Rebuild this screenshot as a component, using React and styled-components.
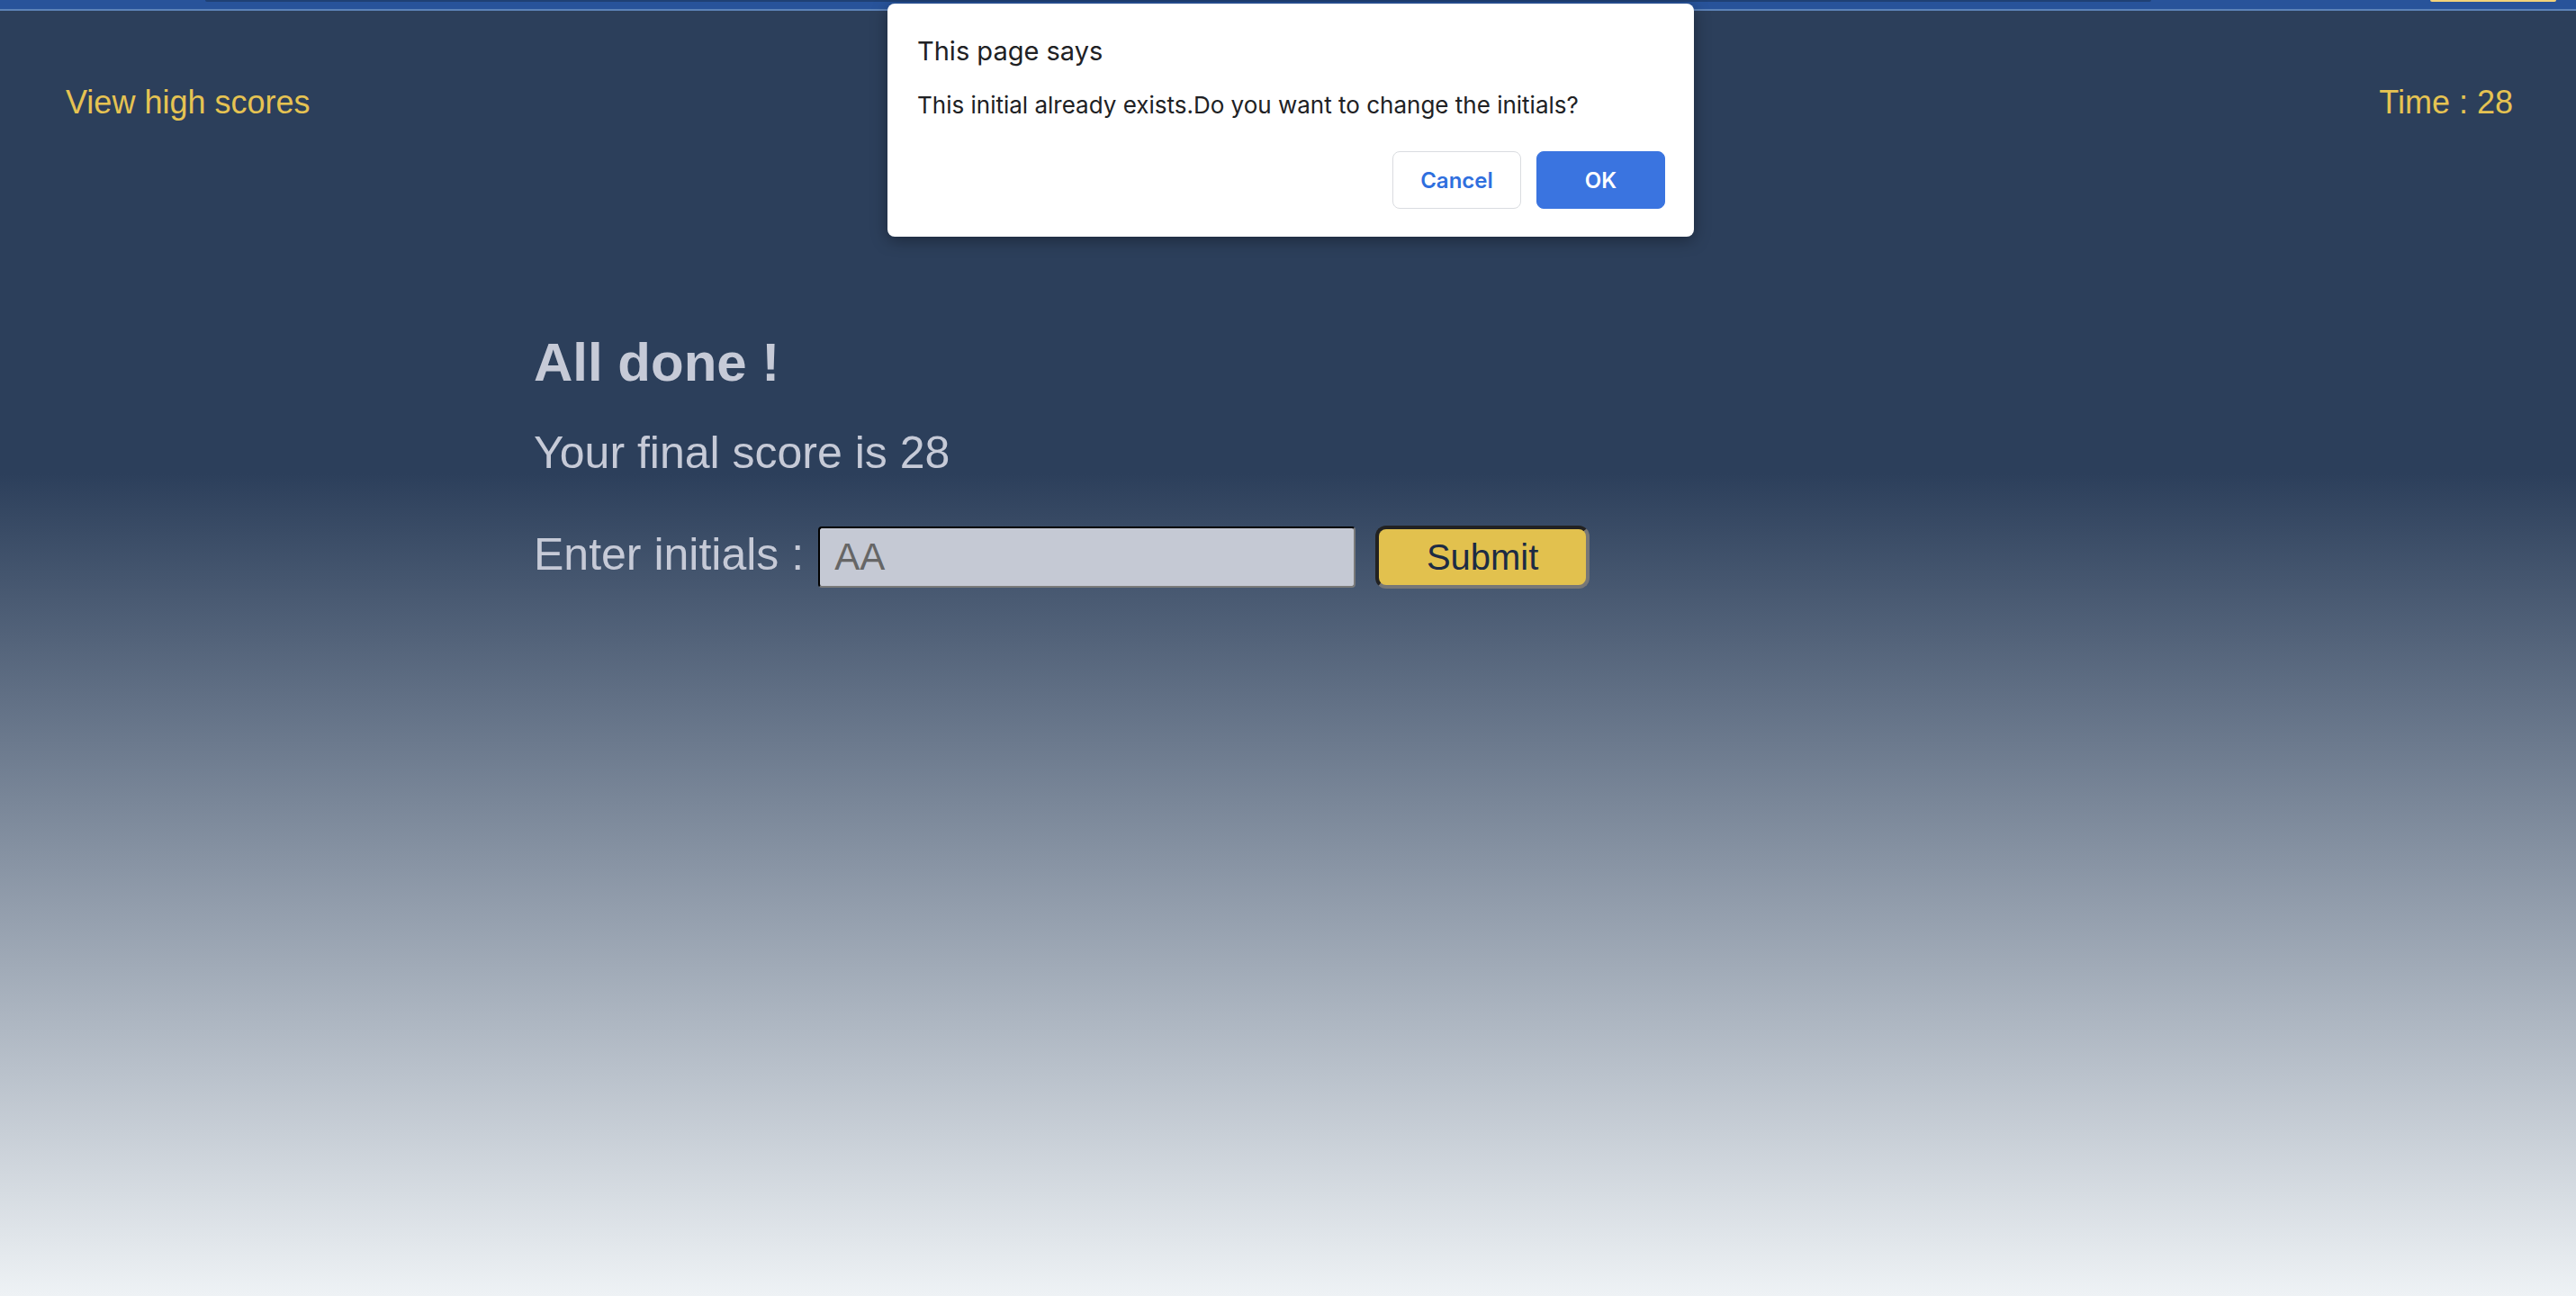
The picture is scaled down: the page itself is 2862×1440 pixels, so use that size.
import React from "react";
import styled, { createGlobalStyle } from "styled-components";

const GlobalStyle = createGlobalStyle`
  html, body {
    margin: 0;
    padding: 0;
    height: 100%;
  }
  body {
    font-family: "Liberation Sans", Arial, Helvetica, sans-serif;
  }
  #root {
    min-height: 100vh;
  }
`;

const Page = styled.div`
  position: relative;
  display: flex;
  flex-direction: column;
  min-height: 100vh;
  overflow: hidden;
`;

const BrowserBar = styled.div`
  display: flex;
  align-items: flex-start;
  height: 10px;
  background: #28539a;
  border-bottom: 2px solid #5c82b8;
  padding-left: 228px;
`;

const TabEdge = styled.div`
  width: 2162px;
  height: 2px;
  background: #1f4074;
  border-radius: 0 0 4px 4px;
`;

const Pill = styled.div`
  margin-left: 310px;
  width: 140px;
  height: 2px;
  background: #f3d27a;
  border-radius: 0 0 6px 6px;
`;

const Main = styled.main`
  flex: 1;
  display: flex;
  flex-direction: column;
  background: linear-gradient(
    to bottom,
    #2c3f5b 0%,
    #2c3f5b 36%,
    #eef2f5 100%
  );
`;

const Header = styled.header`
  display: flex;
  justify-content: space-between;
  align-items: baseline;
  padding: 81px 70px 0 73px;
`;

const HeaderText = styled.div`
  font-size: 36px;
  color: #e6c352;
`;

const Content = styled.section`
  display: flex;
  flex-direction: column;
  margin-left: 593px;
  margin-top: 233px;
  color: #c6cad7;
`;

const Title = styled.h1`
  margin: 0;
  font-size: 60px;
  font-weight: 700;
`;

const Score = styled.p`
  margin: 37px 0 0;
  font-size: 50px;
`;

const Row = styled.form`
  display: flex;
  align-items: baseline;
  margin-top: 52px;
`;

const Label = styled.label`
  font-size: 50px;
  margin-right: 16px;
`;

const Input = styled.input`
  box-sizing: border-box;
  width: 597px;
  height: 68px;
  padding: 0 16px;
  font-family: "Liberation Sans", Arial, sans-serif;
  font-size: 42px;
  color: #666;
  background: #c5c9d4;
  border: 2px inset #777;
  border-top-color: #222;
  border-left-color: #222;
  border-bottom-color: #7a7a7a;
  border-right-color: #7a7a7a;
  border-radius: 4px;
  outline: none;
`;

const SubmitButton = styled.button`
  box-sizing: border-box;
  margin-left: 22px;
  width: 238px;
  height: 70px;
  font-family: "Liberation Sans", Arial, sans-serif;
  font-size: 40px;
  color: #1c2b44;
  background: #e2c14e;
  border: 4px solid #222;
  border-bottom-color: #777;
  border-right-color: #777;
  border-radius: 12px;
  padding: 0;
`;

const Dialog = styled.div`
  position: absolute;
  top: 4px;
  left: 986px;
  box-sizing: border-box;
  width: 896px;
  height: 259px;
  padding: 35px 32px 31px 33px;
  background: #ffffff;
  border-radius: 8px;
  box-shadow: 0 4px 18px rgba(0, 0, 0, 0.35);
  font-family: Inter, "Noto Sans", sans-serif;
  display: flex;
  flex-direction: column;
`;

const DialogTitle = styled.div`
  font-size: 29px;
  line-height: 36px;
  color: #202124;
`;

const DialogMessage = styled.div`
  margin-top: 26px;
  font-size: 26px;
  line-height: 32px;
  color: #202124;
`;

const DialogActions = styled.div`
  margin-top: auto;
  display: flex;
  justify-content: flex-end;
  gap: 17px;
`;

const DialogButton = styled.button`
  box-sizing: border-box;
  width: 143px;
  height: 64px;
  border-radius: 8px;
  font-family: Inter, "Noto Sans", sans-serif;
  font-size: 24px;
  font-weight: 600;
  border: 1px solid ${(p) => (p.$primary ? "#3a74e0" : "#dadce0")};
  background: ${(p) => (p.$primary ? "#3a74e0" : "#ffffff")};
  color: ${(p) => (p.$primary ? "#ffffff" : "#2f6fde")};
`;

export default function App() {
  return (
    <>
      <GlobalStyle />
      <Page>
        <BrowserBar>
          <TabEdge />
          <Pill />
        </BrowserBar>
        <Main>
          <Header>
            <HeaderText>View high scores</HeaderText>
            <HeaderText>Time : 28</HeaderText>
          </Header>
          <Content>
            <Title>All done !</Title>
            <Score>Your final score is 28</Score>
            <Row onSubmit={(e) => e.preventDefault()}>
              <Label htmlFor="initials">Enter initials :</Label>
              <Input id="initials" defaultValue="AA" />
              <SubmitButton type="submit">Submit</SubmitButton>
            </Row>
          </Content>
        </Main>
        <Dialog role="alertdialog">
          <DialogTitle>This page says</DialogTitle>
          <DialogMessage>
            This initial already exists.Do you want to change the initials?
          </DialogMessage>
          <DialogActions>
            <DialogButton>Cancel</DialogButton>
            <DialogButton $primary>OK</DialogButton>
          </DialogActions>
        </Dialog>
      </Page>
    </>
  );
}
